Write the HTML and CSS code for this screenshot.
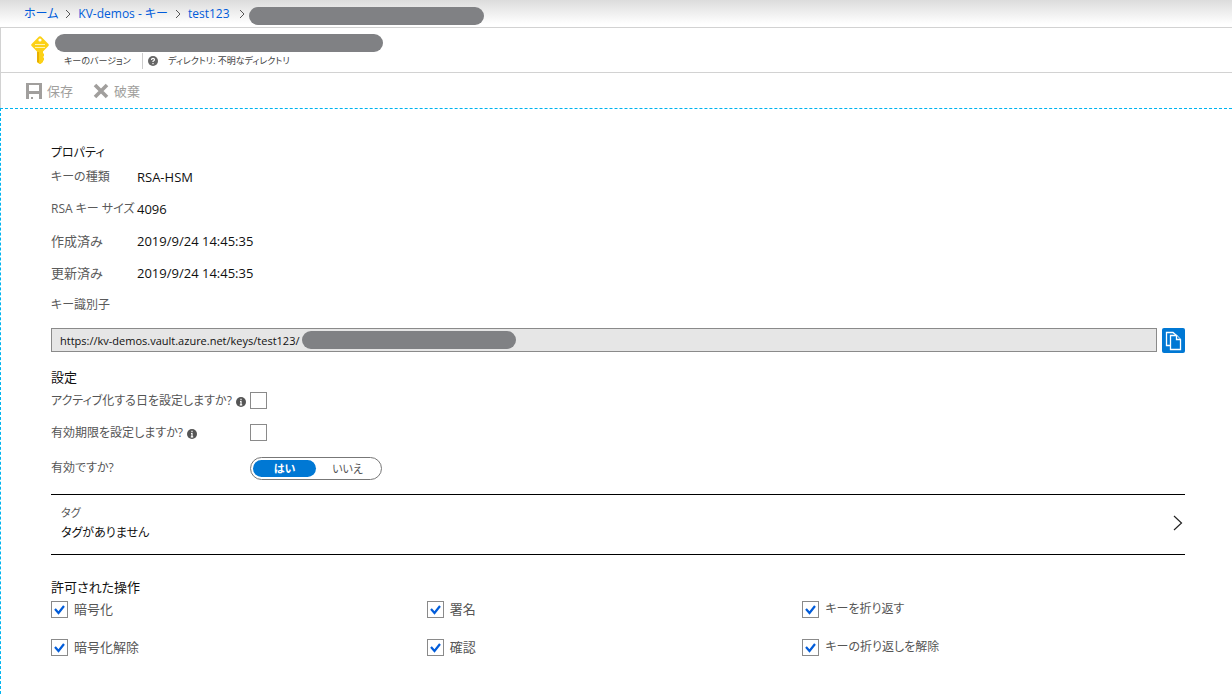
FILE: index.html
```html
<!DOCTYPE html>
<html lang="ja">
<head>
<meta charset="utf-8">
<title>キーのバージョン</title>
<link rel="stylesheet" href="styles.css">
</head>
<body>
<nav class="crumbs">
  <a href="#">ホーム</a>
  <svg class="sep" viewBox="0 0 6 10"><path d="M1 1l4 4-4 4"/></svg>
  <a href="#">KV-demos - キー</a>
  <svg class="sep" viewBox="0 0 6 10"><path d="M1 1l4 4-4 4"/></svg>
  <a href="#">test123</a>
  <svg class="sep last" viewBox="0 0 6 10"><path d="M1 1l4 4-4 4"/></svg>
  <span class="mask mask-crumb"></span>
</nav>
<header class="head">
  <svg class="key" viewBox="0 0 18 28">
    <path fill="#fcd116" d="M8 .5Q9 0 10 .5L17.4 8q.8 1 0 2L12 15.500V17l1 1v2l-1 1 1 1v2l-1 1v1l-3 2.500L6 26V15.500L.6 10q-.8-1 0-2z"/>
    <path fill="#e8b000" d="M6 16h2v11l-2-1z"/>
    <circle cx="9" cy="4" r="1.600" fill="#fff"/>
    <path stroke="#fff3b0" d="M4 8.500h10M4 11.500h10"/>
  </svg>
  <div class="head-text">
    <span class="mask mask-title"></span>
    <div class="sub">
      <span class="kind">キーのバージョン</span>
      <span class="dir"><svg class="dot" viewBox="0 0 10 10"><circle cx="5" cy="5" r="5" fill="#666"/><path d="M3.500 4q0-1.600 1.500-1.600T6.500 3.800Q6.500 4.600 5 5.300V6M5 7v1.200" fill="none" stroke="#fff" stroke-width="1.200"/></svg>ディレクトリ: 不明なディレクトリ</span>
    </div>
  </div>
</header>
<div class="toolbar">
  <button class="cmd" disabled><svg width="16" height="16" viewBox="0 0 16 16"><path fill="#a19f9d" fill-rule="evenodd" d="M0 0h16v16H0zM3 2v6h10V2zM3 11v5h2v-2h2v2h6v-5z"/></svg>保存</button>
  <button class="cmd" disabled><svg width="16" height="16" viewBox="0 0 16 16"><path stroke="#a19f9d" stroke-width="3.600" d="M2 2l12 12M14 2L2 14"/></svg>破棄</button>
</div>
<main class="content">
  <h2 class="kana">プロパティ</h2>
  <dl class="props">
    <dt class="kana">キーの種類</dt><dd>RSA-HSM</dd>
    <dt class="kana">RSA キー サイズ</dt><dd>4096</dd>
    <dt>作成済み</dt><dd>2019/9/24 14:45:35</dd>
    <dt>更新済み</dt><dd>2019/9/24 14:45:35</dd>
    <dt class="kana"><label for="kid">キー識別子</label></dt><dd></dd>
  </dl>
  <div class="kid-row">
    <div class="kid-box">
      <input id="kid" type="text" readonly value="https://kv-demos.vault.azure.net/keys/test123/">
      <span class="mask mask-kid"></span>
    </div>
    <button class="copy" aria-label="コピー"><svg width="18" height="20" viewBox="0 0 18 20"><g fill="#0078d4" stroke="#fff" stroke-width="1.300"><path d="M5 14.500H1.500v-13H8L12 5"/><path d="M5.500 4.500h6l4 4v10h-10z"/><path d="M11.500 4.500v4h4"/></g></svg></button>
  </div>
  <h2>設定</h2>
  <div class="setting">
    <label for="act">アクティブ化する日を設定しますか?<svg class="dot info" viewBox="0 0 10 10"><circle cx="5" cy="5" r="5" fill="#555"/><path d="M5 1.800v1.400M4 4.500h1v3.300M3.800 7.800h2.400" fill="none" stroke="#fff" stroke-width="1.200"/></svg></label>
    <input class="check" id="act" type="checkbox">
  </div>
  <div class="setting">
    <label for="exp">有効期限を設定しますか?<svg class="dot info" viewBox="0 0 10 10"><circle cx="5" cy="5" r="5" fill="#555"/><path d="M5 1.800v1.400M4 4.500h1v3.300M3.800 7.800h2.400" fill="none" stroke="#fff" stroke-width="1.200"/></svg></label>
    <input class="check" id="exp" type="checkbox">
  </div>
  <div class="setting enabled">
    <span id="en">有効ですか?</span>
    <div class="toggle" role="group" aria-labelledby="en"><button class="on" aria-pressed="true">はい</button><button aria-pressed="false">いいえ</button></div>
  </div>
  <button class="tags">
    <span class="tags-text"><span class="tags-name">タグ</span><span class="tags-value">タグがありません</span></span>
    <svg width="10" height="16" viewBox="0 0 10 16"><path d="M1 1l7.500 7L1 15" fill="none" stroke="#222" stroke-width="1.200"/></svg>
  </button>
  <h2>許可された操作</h2>
  <div class="ops">
    <label><input class="check" type="checkbox" checked>暗号化</label>
    <label><input class="check" type="checkbox" checked>署名</label>
    <label class="kana"><input class="check" type="checkbox" checked>キーを折り返す</label>
    <label><input class="check" type="checkbox" checked>暗号化解除</label>
    <label><input class="check" type="checkbox" checked>確認</label>
    <label class="kana"><input class="check" type="checkbox" checked>キーの折り返しを解除</label>
  </div>
</main>
</body>
</html>
```
FILE: styles.css
```css
* { box-sizing: border-box; }
body {
  margin: 0;
  min-height: 100vh;
  display: flex;
  flex-direction: column;
  background: #fff;
  color: #111;
  font: 13px/20px "Open Sans", "Noto Sans CJK JP", sans-serif;
  font-feature-settings: "palt";
}
button, input { font: inherit; font-feature-settings: inherit; color: inherit; margin: 0; }
h2 { margin: 0; font-size: 13px; font-weight: 400; line-height: 20px; }
.kana { font-size: 12px; }
.mask { display: block; height: 18px; border-radius: 9px; background: #808184; }

.crumbs {
  display: flex;
  align-items: center;
  height: 28px;
  padding: 1px 24px 0;
  border-bottom: 1px solid #d2d2d2;
  background: linear-gradient(#dcdcdc, #fff 24px);
  font-size: 12px;
}
.crumbs a { color: #015cda; text-decoration: none; white-space: nowrap; }
.sep { width: 6px; height: 10px; margin: 0 7px; fill: none; stroke: #555; }
.sep.last { margin: 0 4px 0 9px; }
.mask-crumb { width: 235px; margin-top: 4px; }

.head {
  display: flex;
  gap: 6px;
  height: 45px;
  padding: 6px 30px 0;
  border-left: 1px solid #d2d2d2;
  border-bottom: 1px solid #d2d2d2;
}
.key { width: 18px; height: 28px; margin-top: 2px; }
.mask-title { width: 328px; }
.sub { display: flex; align-items: center; margin: 1px 0 0 9px; font-size: 9px; line-height: 16px; color: #444; }
.kind { width: 79px; border-right: 1px solid #ccc; }
.dir { display: flex; align-items: center; gap: 10px; margin-left: 5px; }
.dot { width: 10px; height: 10px; }

.toolbar {
  display: flex;
  gap: 20px;
  height: 35px;
  padding: 0 25px;
  border-left: 1px solid #d2d2d2;
}
.cmd { display: flex; align-items: center; gap: 5px; padding: 0; border: 0; background: none; color: #a19f9d; }

.content {
  flex: 1;
  padding: 34px 47px 24px 50px;
  border-top: 1px dashed #00b4f0;
  border-left: 1px dashed #00b4f0;
}
.props { display: grid; grid-template-columns: 86px 1fr; grid-auto-rows: 32px; margin: 4px 0 0; }
.props dt { color: #5a5a5a; white-space: nowrap; }
.props dd { margin: 0; }
.kid-row { display: flex; gap: 5px; height: 25px; margin: 1px 0 14px; }
.kid-box { position: relative; flex: 1; }
.kid-box input {
  width: 100%;
  height: 24px;
  padding: 0 8px;
  border: 1px solid #8a8a8a;
  background: #e6e6e6;
  font-size: 11px;
}
.mask-kid { position: absolute; left: 251px; top: 3px; width: 214px; }
.copy { display: grid; place-items: center; width: 23px; height: 25px; padding: 0; border: 0; border-radius: 2px; background: #0078d4; }

.setting { display: grid; grid-template-columns: 199px 1fr; height: 32px; margin-top: 5px; font-size: 12px; line-height: 18px; color: #555; }
.setting + .setting { margin-top: 0; }
.setting label { white-space: nowrap; }
.info { margin-left: 4px; vertical-align: -2px; }
.check {
  appearance: none;
  flex: none;
  width: 17px;
  height: 17px;
  border: 1px solid #8a8a8a;
  background: #fff;
}
.check:checked {
  background: url("data:image/svg+xml,%3Csvg xmlns='http://www.w3.org/2000/svg' viewBox='0 0 15 15'%3E%3Cpath d='M3 7l3.500 4L12 4' fill='none' stroke='%23015cda' stroke-width='2.200'/%3E%3C/svg%3E");
}
.setting.enabled { align-items: center; height: 24px; }
.toggle { display: flex; width: 132px; height: 23px; padding: 2px; border: 1px solid #777; border-radius: 12px; font-size: 11px; line-height: 17px; }
.toggle button { flex: 1; padding: 0; border: 0; border-radius: 9px; background: none; }
.toggle .on { background: #0078d4; color: #fff; font-weight: 700; }

.tags {
  display: flex;
  align-items: center;
  justify-content: space-between;
  width: 100%;
  height: 61px;
  margin: 14px 0 22px;
  padding: 0 2px 4px 10px;
  border: solid #000;
  border-width: 1px 0;
  background: none;
  text-align: left;
}
.tags-text { display: flex; flex-direction: column; }
.tags-name { font-size: 11px; color: #555; }
.tags-value { font-size: 12px; }

.ops { display: grid; grid-template-columns: repeat(3, 1fr); row-gap: 18px; margin: 2px 7px 0 0; color: #555; }
.ops label { display: flex; align-items: center; gap: 6px; }
```
